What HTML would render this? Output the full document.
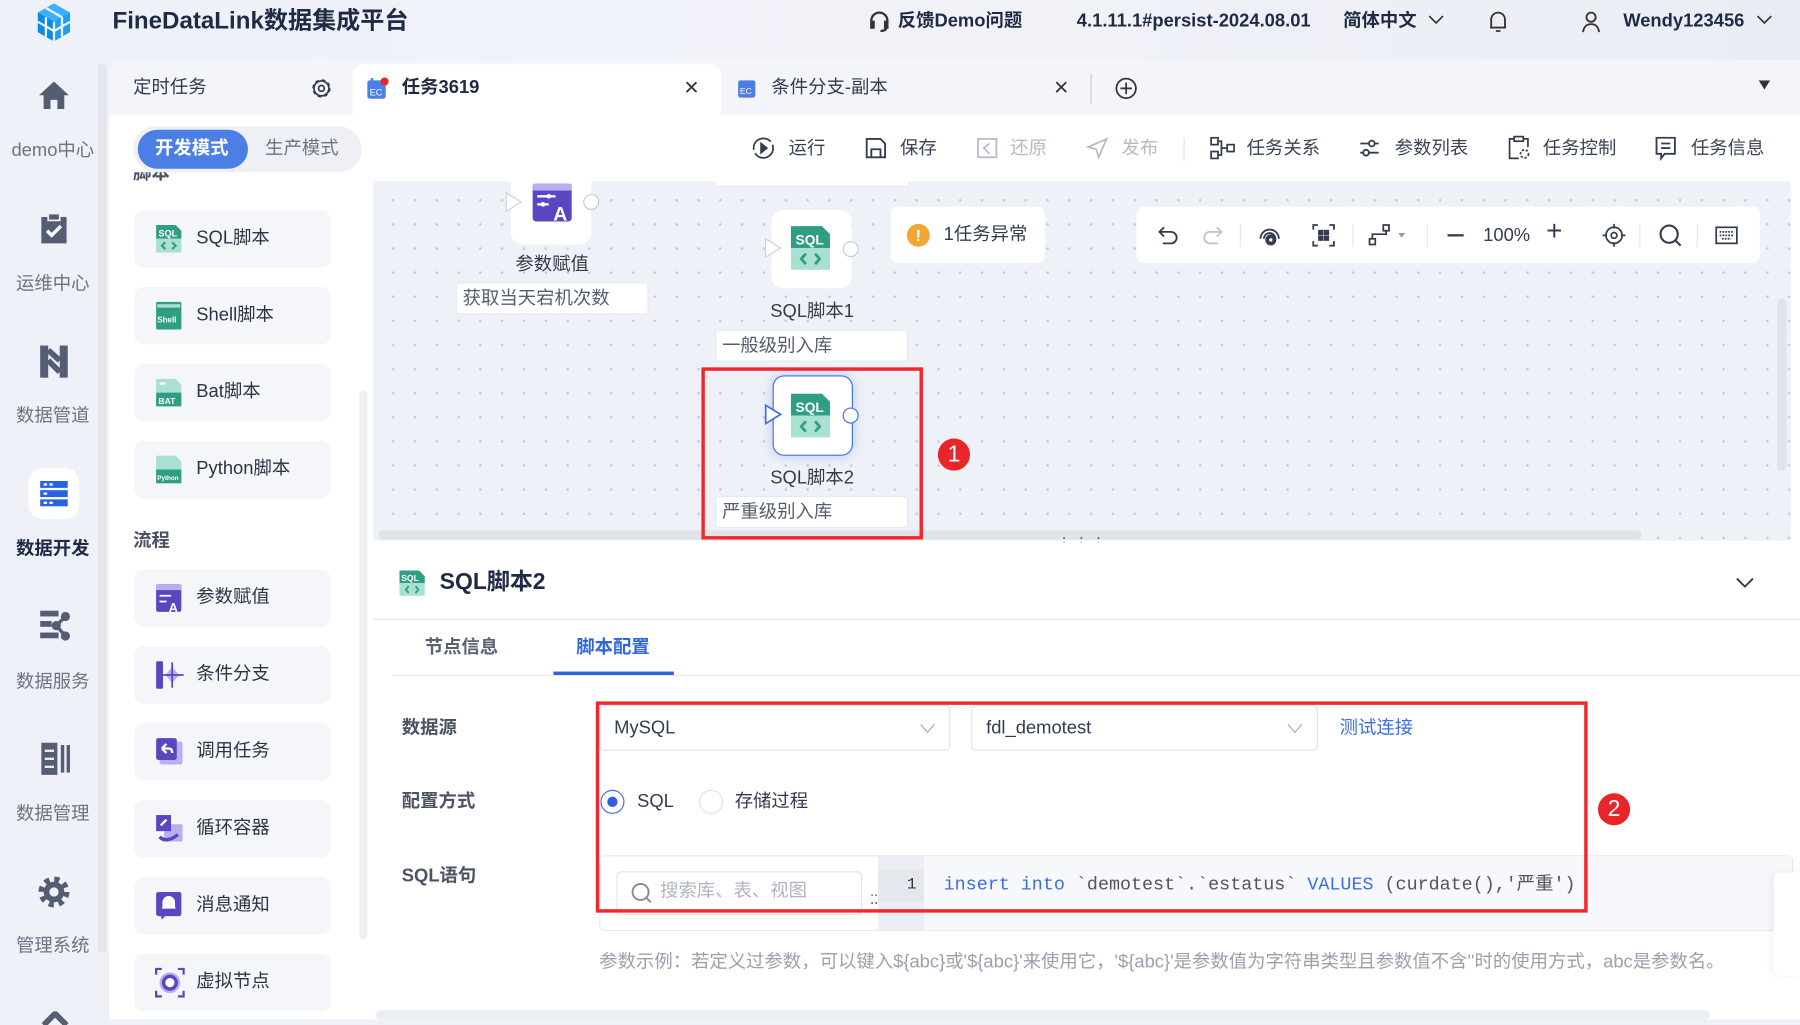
<!DOCTYPE html>
<html><head><meta charset="utf-8">
<style>
*{box-sizing:border-box;margin:0;padding:0}
html,body{width:1800px;height:1019px;overflow:hidden;background:#eef1f7}
body{font-family:"Liberation Sans","Noto Sans CJK SC",sans-serif;color:#333c4d}
#w{position:absolute;left:0;top:0;width:1568px;height:888px;transform:scale(1.147959);transform-origin:0 0;background:linear-gradient(90deg,#eef1f8,#f0f2f8 60%,#e9ecf4)}
.a{position:absolute}
.t{position:absolute;white-space:nowrap;line-height:1.2}
.nav{position:absolute;left:0;width:92px;text-align:center;font-size:16px;color:#6b7385;line-height:1.2}
.item{position:absolute;left:117px;width:171px;height:50px;background:#f5f6fa;border-radius:8px}
.item span{position:absolute;left:54px;top:15px;font-size:16px;color:#2b3445;line-height:1.2}
.item svg{position:absolute;left:18px;top:12px}
.tb{position:absolute;top:120px;font-size:16px;color:#3b4456;white-space:nowrap;line-height:1.2}
.tb.dis{color:#b5bac4}
.lbl{position:absolute;left:350px;font-size:16px;font-weight:bold;color:#4a5263;line-height:1.2}
.sel{position:absolute;top:614px;height:40px;border:1px solid #dfe2ea;border-radius:4px;background:#fff;font-size:16px;color:#333c4d;padding:10px 12px;line-height:1.2}
.red{position:absolute;border:3px solid #f2262c}
.badge{position:absolute;width:28px;height:28px;border-radius:50%;background:#e8262a;color:#fff;font-size:20px;text-align:center;line-height:28px}
</style></head><body>
<div id="w">
<!-- header -->
<svg class="a" style="left:30px;top:2px" width="34" height="36" viewBox="0 0 34 36"><path d="M17 1 L31 9 L31 26 L17 34 L3 26 L3 9Z" fill="#1e9ef5"/><path d="M17 1 L31 9 L17 17 L3 9Z" fill="#3ab0ff"/><path d="M17 17 L17 34 L3 26 L3 9Z" fill="#0b88e8"/><path d="M10 5 L24 13 M3 17 L17 25 L31 17 M17 17 L17 34 M10 13 L10 30 M24 13 L24 30" stroke="#eef2f8" stroke-width="2" fill="none"/></svg>
<div class="t" style="left:98px;top:6px;font-size:21px;font-weight:bold;color:#1f2a44">FineDataLink数据集成平台</div>
<svg class="a" style="left:756px;top:9px" width="20" height="20" viewBox="0 0 20 20" fill="none" stroke="#333" stroke-width="2"><path d="M3 11 V9 a7 7 0 0 1 14 0 V11 M3 10 h2 v5 h-2z M15 10 h2 v5 h-2z M16 15 q0 3 -5 3"/></svg>
<div class="t" style="left:782px;top:9px;font-size:16px;font-weight:bold;color:#1f2a44">反馈Demo问题</div>
<div class="t" style="left:938px;top:9px;font-size:16px;font-weight:bold;color:#1f2a44">4.1.11.1#persist-2024.08.01</div>
<div class="t" style="left:1170px;top:9px;font-size:16px;font-weight:bold;color:#1f2a44">简体中文</div>
<svg class="a" style="left:1244px;top:12px" width="14" height="10"><path d="M1 2 L7 8 L13 2" stroke="#333" fill="none" stroke-width="1.5"/></svg>
<svg class="a" style="left:1296px;top:8px" width="18" height="22" viewBox="0 0 18 22" fill="none" stroke="#333" stroke-width="1.6"><path d="M3 16 V9 a6 6 0 0 1 12 0 V16 H2 H16 M7 19 h4"/></svg>
<svg class="a" style="left:1377px;top:9px" width="18" height="20" viewBox="0 0 18 20" fill="none" stroke="#333" stroke-width="1.6"><circle cx="9" cy="6" r="4"/><path d="M2 19 q1 -7 7 -7 q6 0 7 7"/></svg>
<div class="t" style="left:1414px;top:9px;font-size:16px;font-weight:bold;color:#1f2a44">Wendy123456</div>
<svg class="a" style="left:1530px;top:12px" width="14" height="10"><path d="M1 2 L7 8 L13 2" stroke="#333" fill="none" stroke-width="1.5"/></svg>

<!-- left nav -->
<div class="a" style="left:85px;top:55px;width:8px;height:775px;background:#e3e6ee;border-radius:4px"></div>
<svg class="a" style="left:33px;top:69px" width="28" height="28" viewBox="0 0 28 28"><path d="M14 2 L27 14 H23 V26 H17 V18 H11 V26 H5 V14 H1Z" fill="#545d72"/></svg>
<div class="nav" style="top:122px">demo中心</div>
<svg class="a" style="left:35px;top:185px" width="24" height="28" viewBox="0 0 24 28"><rect x="1" y="4" width="22" height="23" fill="#545d72"/><rect x="7" y="1" width="10" height="6" fill="#545d72" stroke="#eef1f8" stroke-width="1.5"/><path d="M6 16 L10 20 L18 12" stroke="#fff" stroke-width="3" fill="none"/></svg>
<div class="nav" style="top:238px">运维中心</div>
<svg class="a" style="left:34px;top:300px" width="26" height="30" viewBox="0 0 26 30"><rect x="1" y="1" width="7" height="28" fill="#545d72"/><rect x="18" y="1" width="7" height="28" fill="#545d72"/><path d="M8 5 L18 14 M8 14 L18 24" stroke="#545d72" stroke-width="5"/></svg>
<div class="nav" style="top:353px">数据管道</div>
<div class="a" style="left:25px;top:408px;width:44px;height:44px;border-radius:12px;background:#fff"></div>
<svg class="a" style="left:34px;top:418px" width="26" height="24" viewBox="0 0 26 24"><g fill="#2563e0"><rect x="1" y="1" width="24" height="6"/><rect x="1" y="9" width="24" height="6"/><rect x="1" y="17" width="24" height="6"/></g><g fill="#fff"><rect x="4" y="3" width="3" height="2"/><rect x="9" y="3" width="3" height="2"/><rect x="4" y="11" width="3" height="2"/><rect x="4" y="19" width="3" height="2"/><rect x="9" y="19" width="3" height="2"/></g></svg>
<div class="nav" style="top:469px;font-weight:bold;color:#1f2a44">数据开发</div>
<svg class="a" style="left:33px;top:530px" width="30" height="30" viewBox="0 0 30 30" fill="#545d72"><rect x="2" y="2" width="16" height="5"/><rect x="2" y="11" width="10" height="5"/><rect x="2" y="21" width="16" height="5"/><circle cx="24" cy="7" r="4"/><circle cx="24" cy="24" r="4"/><circle cx="16" cy="15" r="4"/><path d="M16 15 L24 7 M16 15 L24 24" stroke="#545d72" stroke-width="3"/></svg>
<div class="nav" style="top:585px">数据服务</div>
<svg class="a" style="left:35px;top:646px" width="26" height="30" viewBox="0 0 26 30" fill="#545d72"><rect x="1" y="1" width="14" height="28"/><rect x="18" y="3" width="3" height="24"/><rect x="23" y="3" width="3" height="24"/><rect x="4" y="7" width="8" height="2" fill="#eef1f8"/><rect x="4" y="14" width="8" height="2" fill="#eef1f8"/><rect x="4" y="21" width="8" height="2" fill="#eef1f8"/></svg>
<div class="nav" style="top:700px">数据管理</div>
<svg class="a" style="left:33px;top:762px" width="28" height="30" viewBox="0 0 28 30"><circle cx="14" cy="15" r="10" fill="none" stroke="#545d72" stroke-width="7" stroke-dasharray="4 3.85"/><circle cx="14" cy="15" r="9" fill="#545d72"/><circle cx="14" cy="15" r="4" fill="#eef1f8"/></svg>
<div class="nav" style="top:815px">管理系统</div>
<svg class="a" style="left:36px;top:881px" width="24" height="12"><path d="M2 12 L12 2 L22 12" stroke="#545d72" stroke-width="5" fill="none"/></svg>

<!-- main panel -->
<div class="a" style="left:95px;top:52px;width:1473px;height:836px;background:#fff;border-radius:12px 0 0 0"></div>
<div class="a" style="left:95px;top:52px;width:1473px;height:48px;background:#f3f5fa;border-radius:12px 0 0 0"></div>
<div class="t" style="left:116px;top:67px;font-size:16px;color:#333c4d">定时任务</div>
<svg class="a" style="left:270px;top:67px" width="20" height="20" viewBox="0 0 20 20"><circle cx="10" cy="10" r="7" fill="none" stroke="#333c4d" stroke-width="2" stroke-dasharray="3 2.5"/><circle cx="10" cy="10" r="6.5" fill="none" stroke="#333c4d" stroke-width="1.5"/><circle cx="10" cy="10" r="2.5" fill="none" stroke="#333c4d" stroke-width="1.5"/></svg>
<div class="a" style="left:307px;top:56px;width:321px;height:46px;background:#fff;border-radius:10px 10px 0 0"></div>
<svg class="a" style="left:319px;top:67px" width="20" height="20" viewBox="0 0 20 20"><rect x="1" y="3" width="16" height="16" rx="2" fill="#4b7fe6"/><rect x="4" y="1" width="2" height="4" fill="#4b7fe6"/><text x="3" y="16" font-size="8" fill="#fff" font-family="Liberation Sans">EC</text><circle cx="16" cy="4" r="3.5" fill="#e8262a"/></svg>
<div class="t" style="left:350px;top:67px;font-size:16px;font-weight:bold;color:#1f2a44">任务3619</div>
<div class="t" style="left:596px;top:63px;font-size:22px;color:#333">×</div>
<svg class="a" style="left:642px;top:68px" width="18" height="18" viewBox="0 0 18 18"><rect x="1" y="2" width="15" height="15" rx="2" fill="#4b7fe6"/><text x="2.5" y="14" font-size="7.5" fill="#fff" font-family="Liberation Sans">EC</text></svg>
<div class="t" style="left:672px;top:67px;font-size:16px;color:#333c4d">条件分支-副本</div>
<div class="t" style="left:918px;top:63px;font-size:22px;color:#333">×</div>
<div class="a" style="left:950px;top:64px;width:1px;height:26px;background:#ccc"></div>
<svg class="a" style="left:971px;top:67px" width="20" height="20" viewBox="0 0 20 20" fill="none" stroke="#333" stroke-width="1.5"><circle cx="10" cy="10" r="8.5"/><path d="M10 5 V15 M5 10 H15"/></svg>
<svg class="a" style="left:1532px;top:70px" width="10" height="8"><path d="M0 0 H10 L5 8Z" fill="#333"/></svg>

<!-- mode toggle -->
<div class="a" style="left:116px;top:110px;width:199px;height:40px;background:#eef0f5;border-radius:20px"></div>
<div class="a" style="left:120px;top:113px;width:96px;height:34px;background:#4b7fe6;border-radius:17px"></div>
<div class="t" style="left:135px;top:120px;font-size:16px;font-weight:bold;color:#fff">开发模式</div>
<div class="t" style="left:231px;top:120px;font-size:16px;color:#6b7385">生产模式</div>

<!-- toolbar -->
<svg class="a" style="left:655px;top:119px" width="20" height="20" viewBox="0 0 20 20" fill="none" stroke="#333c4d" stroke-width="1.5"><circle cx="10" cy="10" r="8.5" stroke-dasharray="22 3"/><path d="M8 6 L13 10 L8 14Z" fill="#333c4d"/></svg>
<div class="tb" style="left:687px">运行</div>
<svg class="a" style="left:753px;top:119px" width="20" height="20" viewBox="0 0 20 20" fill="none" stroke="#333c4d" stroke-width="1.6"><path d="M2 2 H14 L18 6 V18 H2Z M6 18 V11 H14 V18"/></svg>
<div class="tb" style="left:784px">保存</div>
<svg class="a" style="left:850px;top:119px" width="20" height="20" viewBox="0 0 20 20" fill="none" stroke="#b5bac4" stroke-width="1.5"><rect x="2" y="2" width="16" height="16"/><path d="M12 6 L7 10 L12 15"/></svg>
<div class="tb dis" style="left:880px">还原</div>
<svg class="a" style="left:946px;top:119px" width="20" height="20" viewBox="0 0 20 20" fill="none" stroke="#b5bac4" stroke-width="1.5"><path d="M18 2 L2 9 L9 11 L11 18Z"/></svg>
<div class="tb dis" style="left:977px">发布</div>
<div class="a" style="left:1031px;top:120px;width:1px;height:20px;background:#dde0e6"></div>
<svg class="a" style="left:1054px;top:119px" width="22" height="20" viewBox="0 0 22 20" fill="none" stroke="#333c4d" stroke-width="1.5"><rect x="1" y="1" width="6" height="6"/><rect x="1" y="13" width="6" height="6"/><rect x="15" y="7" width="6" height="6"/><path d="M7 4 H10 V16 H7 M10 10 H15"/></svg>
<div class="tb" style="left:1086px">任务关系</div>
<svg class="a" style="left:1184px;top:120px" width="18" height="18" viewBox="0 0 18 18" fill="none" stroke="#333c4d" stroke-width="1.6"><path d="M1 5 H17 M1 13 H17"/><circle cx="11" cy="5" r="2.5" fill="#fff"/><circle cx="6" cy="13" r="2.5" fill="#fff"/></svg>
<div class="tb" style="left:1215px">参数列表</div>
<svg class="a" style="left:1313px;top:118px" width="20" height="22" viewBox="0 0 20 22" fill="none" stroke="#333c4d" stroke-width="1.5"><path d="M6 3 H2 V20 H10 M14 3 H18 V10"/><rect x="6" y="1" width="8" height="4"/><circle cx="15" cy="16" r="3.5" stroke-dasharray="2 1.5"/></svg>
<div class="tb" style="left:1344px">任务控制</div>
<svg class="a" style="left:1442px;top:119px" width="18" height="21" viewBox="0 0 18 21" fill="none" stroke="#333c4d" stroke-width="1.6"><path d="M1 1 H17 V15 H8 L5 19 V15 H1Z M5 6 H13 M5 10 H13"/></svg>
<div class="tb" style="left:1473px">任务信息</div>

<!-- left component panel -->
<div class="t" style="left:116px;top:150px;font-size:16px;font-weight:bold;color:#4a5263;height:10px;overflow:hidden;line-height:20px"><span style="position:relative;top:-8px">脚本</span></div>
<div class="a" style="left:313px;top:340px;width:7px;height:478px;background:#eceef2;border-radius:4px"></div>
<div class="item" style="top:183px"><svg width="24" height="26" viewBox="0 0 24 26"><path d="M1 1 H18 L23 6 V13 H1Z" fill="#2f9e84"/><rect x="1" y="13" width="22" height="12" fill="#a9e0d2"/><text x="3" y="11" font-size="8" font-weight="bold" fill="#fff" font-family="Liberation Sans">SQL</text><path d="M9 16 L6 19 L9 22 M15 16 L18 19 L15 22" stroke="#2f9e84" stroke-width="1.8" fill="none"/></svg><span>SQL脚本</span></div>
<div class="item" style="top:250px"><svg width="24" height="26" viewBox="0 0 24 26"><rect x="1" y="1" width="22" height="24" rx="1" fill="#2f9e84"/><rect x="2" y="3" width="20" height="3" fill="#a9e0d2"/><text x="2" y="19" font-size="7" font-weight="bold" fill="#fff" font-family="Liberation Sans">Shell</text></svg><span>Shell脚本</span></div>
<div class="item" style="top:317px"><svg width="24" height="26" viewBox="0 0 24 26"><path d="M1 1 H18 L23 6 V13 H1Z" fill="#a9e0d2"/><rect x="1" y="13" width="22" height="12" fill="#2f9e84"/><rect x="4" y="4" width="5" height="2" fill="#fff"/><text x="3" y="23" font-size="7.5" font-weight="bold" fill="#fff" font-family="Liberation Sans">BAT</text></svg><span>Bat脚本</span></div>
<div class="item" style="top:384px"><svg width="24" height="26" viewBox="0 0 24 26"><path d="M1 1 H18 L23 6 V13 H1Z" fill="#a9e0d2"/><rect x="1" y="13" width="22" height="12" fill="#2f9e84"/><text x="2" y="22" font-size="5.5" font-weight="bold" fill="#fff" font-family="Liberation Sans">Python</text></svg><span>Python脚本</span></div>
<div class="t" style="left:116px;top:462px;font-size:16px;font-weight:bold;color:#4a5263">流程</div>
<div class="item" style="top:496px"><svg width="24" height="26" viewBox="0 0 24 26"><rect x="1" y="1" width="22" height="24" rx="2" fill="#5b46c2"/><rect x="1" y="1" width="22" height="5" fill="#b9aef0"/><path d="M4 11 H14 M4 16 H10" stroke="#fff" stroke-width="1.5"/><text x="12" y="25" font-size="11" font-weight="bold" fill="#fff" font-family="Liberation Sans">A</text></svg><span>参数赋值</span></div>
<div class="item" style="top:563px"><svg width="26" height="26" viewBox="0 0 26 26"><rect x="1" y="1" width="6" height="24" rx="1" fill="#5b46c2"/><path d="M15 6 L21 13 L15 20 L9 13Z" fill="#b9aef0"/><path d="M15 2 V24 M7 13 H25" stroke="#5b46c2" stroke-width="1.5"/></svg><span>条件分支</span></div>
<div class="item" style="top:630px"><svg width="26" height="26" viewBox="0 0 26 26"><rect x="4" y="4" width="20" height="20" rx="2" fill="#b9aef0"/><rect x="1" y="1" width="18" height="19" rx="2" fill="#5b46c2"/><path d="M6 10 L10 6 M6 10 L10 14 M6 10 H12 Q15 10 15 14" stroke="#fff" stroke-width="2" fill="none"/></svg><span>调用任务</span></div>
<div class="item" style="top:697px"><svg width="26" height="26" viewBox="0 0 26 26"><rect x="8" y="9" width="16" height="15" fill="#b9aef0"/><rect x="1" y="1" width="13" height="14" fill="#5b46c2"/><path d="M4 20 Q10 26 20 18" stroke="#5b46c2" stroke-width="3" fill="none"/><path d="M5 10 L10 5" stroke="#fff" stroke-width="2"/></svg><span>循环容器</span></div>
<div class="item" style="top:764px"><svg width="24" height="26" viewBox="0 0 24 26"><rect x="1" y="1" width="22" height="21" rx="2" fill="#5b46c2"/><path d="M7 15 V10 a5 5 0 0 1 10 0 V15Z M6 15 H18" fill="#fff" stroke="#fff"/><path d="M5 22 L6 25 L9 22" fill="#5b46c2"/></svg><span>消息通知</span></div>
<div class="item" style="top:831px"><svg width="26" height="26" viewBox="0 0 26 26"><circle cx="13" cy="13" r="9" fill="#b9aef0"/><circle cx="13" cy="13" r="7" fill="#5b46c2"/><circle cx="13" cy="13" r="4" fill="#fff"/><path d="M1 6 V1 H6 M20 1 H25 V6 M25 20 V25 H20 M6 25 H1 V20" stroke="#5b46c2" stroke-width="2" fill="none"/></svg><span>虚拟节点</span></div>

<!-- canvas -->
<div class="a" style="left:325px;top:158px;width:1235px;height:313px;background-color:#eef1f7;background-image:radial-gradient(circle,#c6cbd5 1px,transparent 1.3px);background-size:19px 21px;background-position:8px 6px"></div>
<div class="a" style="left:1548px;top:260px;width:8px;height:150px;background:#e0e3ea;border-radius:4px"></div>
<div class="a" style="left:330px;top:462px;width:1100px;height:8px;background:#e0e3ea;border-radius:4px"></div>
<!-- param node -->
<div class="a" style="left:445px;top:158px;width:70px;height:55px;background:#fff;border-radius:0 0 10px 10px"></div>
<svg class="a" style="left:463px;top:160px" width="36" height="34" viewBox="0 0 36 34"><rect x="1" y="0" width="34" height="33" rx="3" fill="#5b46c2"/><rect x="1" y="0" width="34" height="6" fill="#b9aef0"/><path d="M5 11 H21 M5 18 H15" stroke="#fff" stroke-width="2"/><circle cx="15" cy="11" r="2" fill="#fff"/><circle cx="10" cy="18" r="2" fill="#fff"/><text x="19" y="32" font-size="17" font-weight="bold" fill="#fff" font-family="Liberation Sans">A</text></svg>
<svg class="a" style="left:440px;top:167px" width="16" height="18"><path d="M1 1 L14 9 L1 17Z" fill="#fff" stroke="#ccd1db"/></svg>
<div class="a" style="left:508px;top:169px;width:14px;height:14px;border-radius:50%;background:#fff;border:1px solid #c5cad4"></div>
<div class="t" style="left:449px;top:221px;font-size:16px;color:#333c4d">参数赋值</div>
<div class="a" style="left:397px;top:246px;width:168px;height:28px;background:#fff;border:1px solid #e6e8ee;border-radius:3px;font-size:16px;color:#555e6e;padding:4px 5px;line-height:1.2">获取当天宕机次数</div>
<div class="a" style="left:622px;top:158px;width:170px;height:5px;background:#fff;border:1px solid #e6e8ee;border-top:none"></div>
<!-- SQL1 -->
<div class="a" style="left:672px;top:183px;width:70px;height:68px;background:#fff;border-radius:10px"></div>
<svg class="a" style="left:688px;top:196px" width="36" height="40" viewBox="0 0 36 40"><path d="M1 1 H28 L35 8 V20 H1Z" fill="#2f9e84"/><rect x="1" y="20" width="34" height="19" fill="#a9e0d2"/><text x="5" y="17" font-size="12" font-weight="bold" fill="#fff" font-family="Liberation Sans">SQL</text><path d="M14 25 L10 29.5 L14 34 M22 25 L26 29.5 L22 34" stroke="#2f9e84" stroke-width="2.4" fill="none"/></svg>
<svg class="a" style="left:666px;top:207px" width="16" height="18"><path d="M1 1 L14 9 L1 17Z" fill="#fff" stroke="#ccd1db"/></svg>
<div class="a" style="left:734px;top:210px;width:14px;height:14px;border-radius:50%;background:#fff;border:1px solid #c5cad4"></div>
<div class="t" style="left:671px;top:262px;font-size:16px;color:#333c4d">SQL脚本1</div>
<div class="a" style="left:623px;top:287px;width:168px;height:28px;background:#fff;border:1px solid #e6e8ee;border-radius:3px;font-size:16px;color:#555e6e;padding:4px 5px;line-height:1.2">一般级别入库</div>
<!-- SQL2 -->
<div class="a" style="left:673px;top:327px;width:70px;height:70px;background:#fff;border:1.5px solid #3f6fe0;border-radius:10px;box-shadow:0 0 10px rgba(63,111,224,.3)"></div>
<svg class="a" style="left:688px;top:342px" width="36" height="40" viewBox="0 0 36 40"><path d="M1 1 H28 L35 8 V20 H1Z" fill="#2f9e84"/><rect x="1" y="20" width="34" height="19" fill="#a9e0d2"/><text x="5" y="17" font-size="12" font-weight="bold" fill="#fff" font-family="Liberation Sans">SQL</text><path d="M14 25 L10 29.5 L14 34 M22 25 L26 29.5 L22 34" stroke="#2f9e84" stroke-width="2.4" fill="none"/></svg>
<svg class="a" style="left:666px;top:352px" width="16" height="18"><path d="M1 1 L14 9 L1 17Z" fill="#fff" stroke="#3f6fe0" stroke-width="1.5"/></svg>
<div class="a" style="left:734px;top:355px;width:14px;height:14px;border-radius:50%;background:#fff;border:1.5px solid #3f6fe0"></div>
<div class="t" style="left:671px;top:407px;font-size:16px;color:#333c4d">SQL脚本2</div>
<div class="a" style="left:623px;top:432px;width:168px;height:28px;background:#fff;border:1px solid #e6e8ee;border-radius:3px;font-size:16px;color:#555e6e;padding:4px 5px;line-height:1.2">严重级别入库</div>
<div class="red" style="left:611px;top:320px;width:193px;height:150px"></div>
<div class="badge" style="left:817px;top:382px">1</div>
<!-- exception -->
<div class="a" style="left:776px;top:180px;width:134px;height:49px;background:#fff;border-radius:6px"></div>
<div class="a" style="left:790px;top:195px;width:20px;height:20px;border-radius:50%;background:#f0a733;color:#fff;font-size:14px;font-weight:bold;text-align:center;line-height:20px">!</div>
<div class="t" style="left:822px;top:195px;font-size:16px;color:#333c4d">1任务异常</div>
<!-- canvas tools -->
<div class="a" style="left:990px;top:180px;width:543px;height:49px;background:#fff;border-radius:6px"></div>
<svg class="a" style="left:1008px;top:195px" width="20" height="20" viewBox="0 0 20 20" fill="none" stroke="#333c4d" stroke-width="1.6"><path d="M6 3 L2 7 L6 11 M2 7 H12 a5 5 0 0 1 0 10 H5"/></svg>
<svg class="a" style="left:1046px;top:195px" width="20" height="20" viewBox="0 0 20 20" fill="none" stroke="#c0c4cc" stroke-width="1.6"><path d="M14 3 L18 7 L14 11 M18 7 H8 a5 5 0 0 0 0 10 H15"/></svg>
<div class="a" style="left:1080px;top:195px;width:1px;height:20px;background:#e4e6eb"></div>
<svg class="a" style="left:1095px;top:194px" width="22" height="22" viewBox="0 0 22 22" fill="none" stroke="#333c4d" stroke-width="1.6"><path d="M3 14 a8 8 0 1 1 16 0 M6 14 a5 5 0 1 1 10 0"/><circle cx="12" cy="15" r="4" fill="#333c4d"/><circle cx="12" cy="15" r="1.5" fill="#fff" stroke="none"/></svg>
<svg class="a" style="left:1143px;top:195px" width="20" height="20" viewBox="0 0 20 20" fill="none" stroke="#333c4d" stroke-width="1.6"><path d="M1 5 V1 H5 M15 1 H19 V5 M19 15 V19 H15 M5 19 H1 V15"/><rect x="6" y="6" width="3" height="3" fill="#333c4d"/><rect x="11" y="6" width="3" height="3" fill="#333c4d"/><rect x="6" y="11" width="3" height="3" fill="#333c4d"/><rect x="11" y="11" width="3" height="3" fill="#333c4d"/></svg>
<div class="a" style="left:1178px;top:195px;width:1px;height:20px;background:#e4e6eb"></div>
<svg class="a" style="left:1192px;top:195px" width="36" height="20" viewBox="0 0 36 20" fill="none" stroke="#333c4d" stroke-width="1.5"><rect x="1" y="13" width="5" height="5"/><rect x="13" y="1" width="5" height="5"/><path d="M3.5 13 V9 H15.5 V6"/><path d="M26 8 H32 L29 12Z" fill="#999" stroke="none"/></svg>
<div class="a" style="left:1243px;top:195px;width:1px;height:20px;background:#e4e6eb"></div>
<div class="a" style="left:1261px;top:204px;width:14px;height:2px;background:#333c4d"></div>
<div class="t" style="left:1292px;top:196px;font-size:16px;color:#333c4d">100%</div>
<div class="t" style="left:1347px;top:190px;font-size:24px;color:#333c4d;font-weight:300;line-height:1">+</div>
<svg class="a" style="left:1395px;top:194px" width="22" height="22" viewBox="0 0 22 22" fill="none" stroke="#333c4d" stroke-width="1.5"><circle cx="11" cy="11" r="7"/><circle cx="11" cy="11" r="2.5"/><path d="M11 1 V5 M11 17 V21 M1 11 H5 M17 11 H21"/></svg>
<div class="a" style="left:1428px;top:195px;width:1px;height:20px;background:#e4e6eb"></div>
<svg class="a" style="left:1444px;top:194px" width="22" height="22" viewBox="0 0 22 22" fill="none" stroke="#333c4d" stroke-width="1.8"><circle cx="10" cy="10" r="7.5"/><path d="M15 15 L20 20"/></svg>
<div class="a" style="left:1478px;top:195px;width:1px;height:20px;background:#e4e6eb"></div>
<svg class="a" style="left:1494px;top:197px" width="20" height="16" viewBox="0 0 20 16" fill="none" stroke="#333c4d" stroke-width="1.5"><rect x="1" y="1" width="18" height="14"/><path d="M4 5 H16 M4 8 H16 M6 11 H14" stroke-dasharray="1.5 1"/></svg>

<div class="t" style="left:920px;top:470px;font-size:14px;color:#666;letter-spacing:1px;line-height:7px">⋮⋮⋮</div>

<!-- bottom panel -->
<div class="a" style="left:325px;top:473px;width:1243px;height:415px;background:#fff"></div>
<svg class="a" style="left:347px;top:496px" width="24" height="24" viewBox="0 0 24 24"><path d="M1 1 H18 L23 6 V12 H1Z" fill="#2f9e84"/><rect x="1" y="12" width="22" height="11" fill="#a9e0d2"/><text x="2.5" y="10" font-size="7.5" font-weight="bold" fill="#fff" font-family="Liberation Sans">SQL</text><path d="M9 14.5 L6.5 17.5 L9 20.5 M15 14.5 L17.5 17.5 L15 20.5" stroke="#2f9e84" stroke-width="1.6" fill="none"/></svg>
<div class="t" style="left:383px;top:495px;font-size:20px;font-weight:bold;color:#1f2a44">SQL脚本2</div>
<svg class="a" style="left:1512px;top:503px" width="16" height="10"><path d="M1 1 L8 8 L15 1" stroke="#333" fill="none" stroke-width="1.6"/></svg>
<div class="a" style="left:325px;top:539px;width:1243px;height:1px;background:#e6e8ee"></div>
<div class="t" style="left:370px;top:555px;font-size:16px;font-weight:bold;color:#5a6272">节点信息</div>
<div class="t" style="left:502px;top:555px;font-size:16px;font-weight:bold;color:#2f66e0">脚本配置</div>
<div class="a" style="left:482px;top:585px;width:105px;height:3px;background:#2f66e0"></div>
<div class="a" style="left:342px;top:588px;width:1226px;height:1px;background:#e6e8ee"></div>

<div class="lbl" style="top:625px">数据源</div>
<div class="sel" style="left:522px;width:306px">MySQL<svg style="position:absolute;right:12px;top:15px" width="14" height="9"><path d="M1 1 L7 8 L13 1" stroke="#aaa" fill="none"/></svg></div>
<div class="sel" style="left:846px;width:302px">fdl_demotest<svg style="position:absolute;right:12px;top:15px" width="14" height="9"><path d="M1 1 L7 8 L13 1" stroke="#aaa" fill="none"/></svg></div>
<div class="t" style="left:1167px;top:625px;font-size:16px;color:#3a6ee8">测试连接</div>

<div class="lbl" style="top:689px">配置方式</div>
<div class="a" style="left:523px;top:688px;width:21px;height:21px;border-radius:50%;border:1px solid #3f6fe0;background:#fff"></div>
<div class="a" style="left:529px;top:694px;width:9px;height:9px;border-radius:50%;background:#2f5fdc"></div>
<div class="t" style="left:555px;top:689px;font-size:16px;color:#333c4d">SQL</div>
<div class="a" style="left:609px;top:688px;width:21px;height:21px;border-radius:50%;border:1px solid #dfe2ea;background:#fff"></div>
<div class="t" style="left:640px;top:689px;font-size:16px;color:#333c4d">存储过程</div>

<div class="lbl" style="top:754px">SQL语句</div>
<div class="a" style="left:522px;top:745px;width:1040px;height:66px;border:1px solid #e6e8ee;border-radius:4px;background:#fff"></div>
<div class="a" style="left:765px;top:746px;width:796px;height:64px;background:#f7f8fb"></div>
<div class="a" style="left:765px;top:746px;width:40px;height:64px;background:#eceef3"></div>
<div class="a" style="left:765px;top:758px;width:40px;height:28px;background:#e4e7ee"></div>
<div class="t" style="left:790px;top:763px;font-size:14px;color:#333;font-family:'Liberation Mono',monospace">1</div>
<div class="t" style="left:822px;top:762px;font-size:16px;font-family:'Liberation Mono','Noto Sans CJK SC',monospace;color:#555"><span style="color:#3a6ee8">insert into</span> `demotest`.`estatus` <span style="color:#3a6ee8">VALUES</span> (curdate(),'严重')</div>
<div class="a" style="left:537px;top:759px;width:214px;height:38px;border:1px solid #e3e5ea;border-radius:4px;background:#fff"></div>
<svg class="a" style="left:549px;top:768px" width="20" height="20" viewBox="0 0 20 20" fill="none" stroke="#888" stroke-width="1.6"><circle cx="9" cy="9" r="7"/><path d="M14 14 L18 18"/></svg>
<div class="t" style="left:575px;top:767px;font-size:16px;color:#b0b5bf">搜索库、表、视图</div>
<div class="t" style="left:758px;top:781px;font-size:11px;color:#555;line-height:7px">⁚⁚<br>⁚⁚</div>
<div class="a" style="left:1545px;top:760px;width:23px;height:90px;background:#fff;box-shadow:-2px 0 6px rgba(0,0,0,.06);border-radius:6px 0 0 6px"></div>

<div class="red" style="left:519px;top:611px;width:864px;height:184px"></div>
<div class="badge" style="left:1392px;top:691px">2</div>

<div class="t" style="left:522px;top:829px;font-size:16px;color:#9aa0ad">参数示例：若定义过参数，可以键入${abc}或'${abc}'来使用它，'${abc}'是参数值为字符串类型且参数值不含''时的使用方式，abc是参数名。</div>
<div class="a" style="left:327px;top:880px;width:1163px;height:8px;background:#eceef2;border-radius:4px"></div>
</div>
</body></html>
